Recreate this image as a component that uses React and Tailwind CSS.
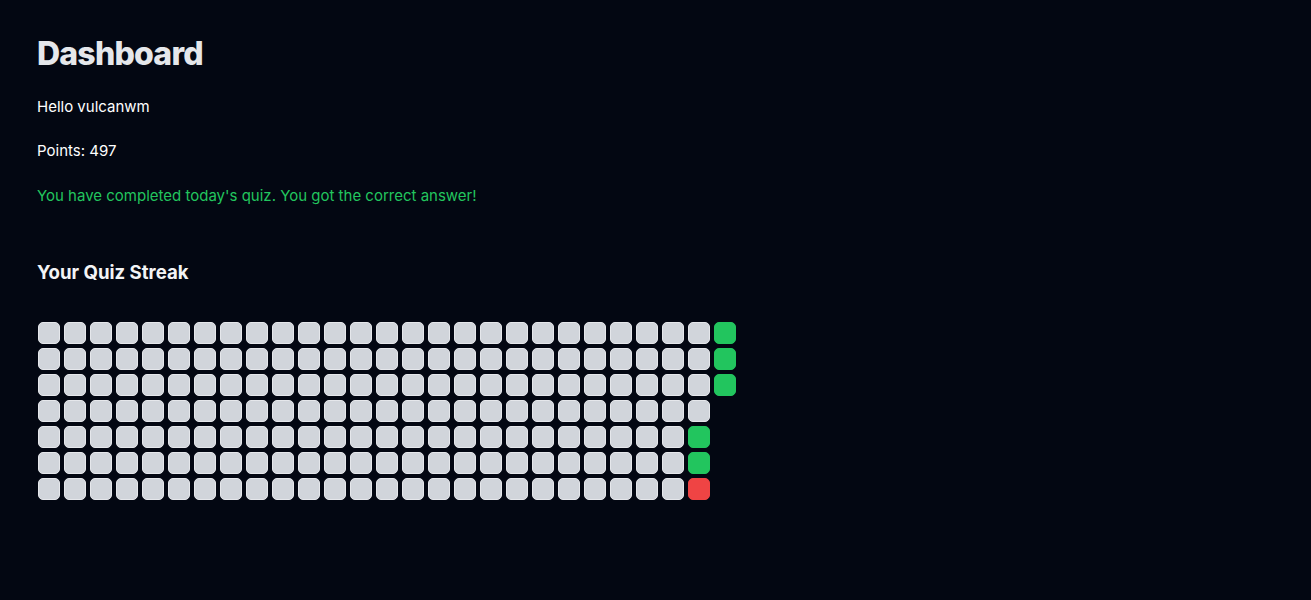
import React from 'react'

const COLUMNS = 27

// streak cells, column-major like a contribution graph
function buildCells() {
  const cols = []
  for (let c = 0; c < COLUMNS; c++) {
    const count = c === COLUMNS - 1 ? 3 : 7
    const col = []
    for (let r = 0; r < count; r++) {
      let status = 'none'
      if (c === COLUMNS - 1) status = 'correct'
      if (c === COLUMNS - 2 && (r === 4 || r === 5)) status = 'correct'
      if (c === COLUMNS - 2 && r === 6) status = 'wrong'
      col.push(status)
    }
    cols.push(col)
  }
  return cols.flat()
}

function StreakCell({ status }) {
  if (status === 'correct') return <div className="w-[22px] h-[22px] rounded-[5px] bg-[#22c55e] border border-[#22c55e]" />
  if (status === 'wrong') return <div className="w-[22px] h-[22px] rounded-[5px] bg-[#ef4444] border border-[#ef4444]" />
  return <div className="w-[22px] h-[22px] rounded-[5px] bg-[#d1d5db] border border-[#e5e7eb]" />
}

export default function App() {
  const cells = buildCells()

  return (
    <div className="min-h-screen bg-[#030712] pl-[37px] pt-[34px] font-['Inter','Liberation_Sans',sans-serif]">
      <h1 className="text-[32px] leading-[40px] font-extrabold tracking-tight text-[#e5e7eb]">Dashboard</h1>
      <p className="mt-[20.5px] text-[15px] leading-6 text-white">Hello vulcanwm</p>
      <p className="mt-[20.5px] text-[15px] leading-6 text-white">Points: 497</p>
      <p className="mt-[20.5px] text-[15px] leading-6 text-[#22c55e]">You have completed today's quiz. You got the correct answer!</p>

      <h2 className="mt-[50.5px] text-[18.6px] leading-7 font-bold text-[#f3f4f6]">Your Quiz Streak</h2>

      <div className="mt-[35.5px] ml-px grid grid-flow-col grid-rows-7 auto-cols-[22px] gap-1 w-fit">
        {cells.map((status, i) => (
          <StreakCell key={i} status={status} />
        ))}
      </div>
    </div>
  )
}
